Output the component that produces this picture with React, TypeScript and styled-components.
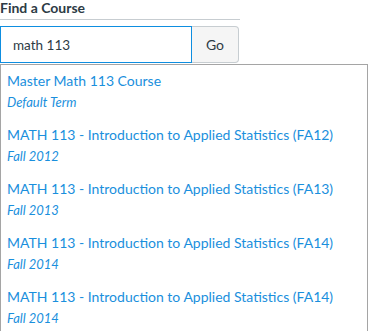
import styled, { createGlobalStyle } from 'styled-components'

const GlobalStyle = createGlobalStyle`
  html, body {
    margin: 0;
    padding: 0;
    background: #ffffff;
    font-family: Lato, "Liberation Sans", sans-serif;
    overflow: hidden;
  }
`

const Page = styled.div`
  width: 369px;
  height: 331px;
  overflow: hidden;
`

const Heading = styled.h2`
  margin: 0;
  width: 240px;
  font-size: 14px;
  font-weight: 700;
  line-height: 15px;
  color: #2d3b45;
  padding-bottom: 4px;
  border-bottom: 1px solid #c7cdd1;
`

const SearchRow = styled.div`
  display: flex;
  margin-top: 6px;
  height: 37px;
`

const SearchInput = styled.input`
  box-sizing: border-box;
  width: 192px;
  height: 37px;
  margin: 0;
  padding: 0 12px;
  border: 1px solid #0e8ee0;
  border-radius: 0;
  outline: none;
  font-family: Lato, "Liberation Sans", sans-serif;
  font-size: 13.5px;
  color: #2d3b45;
`

const GoButton = styled.button`
  box-sizing: border-box;
  width: 47px;
  height: 37px;
  margin: 0;
  padding: 0;
  border: 1px solid #c7cdd1;
  border-left: none;
  border-radius: 0 4px 4px 0;
  background: #f5f5f5;
  font-family: Lato, "Liberation Sans", sans-serif;
  font-size: 14px;
  color: #2d3b45;
`

const Dropdown = styled.ul`
  list-style: none;
  margin: 1px 0 0 0;
  padding: 0 0 20px 0;
  width: 368px;
  box-sizing: border-box;
  border: 1px solid #a5a5a5;
  background: #ffffff;
`

const Option = styled.li`
  padding: 4px 6px 6px 6px;
  height: 44px;
`

const CourseName = styled.div`
  font-size: 14px;
  line-height: 23px;
  color: #1a8fdd;
  white-space: nowrap;
`

const Term = styled.div`
  font-size: 13px;
  font-style: italic;
  line-height: 21px;
  color: #1a8fdd;
`

const courses = [
  { name: 'Master Math 113 Course', term: 'Default Term' },
  { name: 'MATH 113 - Introduction to Applied Statistics (FA12)', term: 'Fall 2012' },
  { name: 'MATH 113 - Introduction to Applied Statistics (FA13)', term: 'Fall 2013' },
  { name: 'MATH 113 - Introduction to Applied Statistics (FA14)', term: 'Fall 2014' },
  { name: 'MATH 113 - Introduction to Applied Statistics (FA14)', term: 'Fall 2014' },
]

export default function App() {
  return (
    <Page>
      <GlobalStyle />
      <Heading>Find a Course</Heading>
      <SearchRow>
        <SearchInput defaultValue="math 113" />
        <GoButton>Go</GoButton>
      </SearchRow>
      <Dropdown>
        {courses.map((c, i) => (
          <Option key={i}>
            <CourseName>{c.name}</CourseName>
            <Term>{c.term}</Term>
          </Option>
        ))}
      </Dropdown>
    </Page>
  )
}
